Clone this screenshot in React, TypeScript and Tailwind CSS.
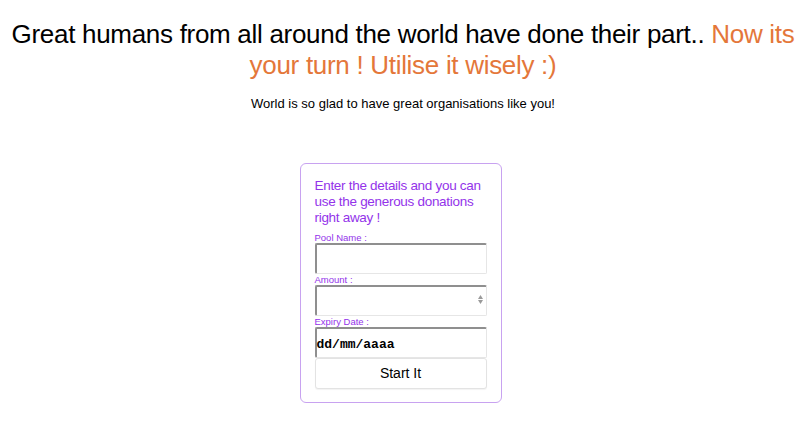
import React from 'react';

const labelCls = "block text-[9.5px] leading-[10px] text-[#9333ea] mt-[1px]";
const inputCls =
  "block w-full h-[31px] bg-white border-t-2 border-l-2 border-r border-b border-t-[#8f8f8f] border-l-[#8f8f8f] border-r-[#e6e6e6] border-b-[#e6e6e6] rounded-[2px] px-1 text-[13px] outline-none";

const App: React.FC = () => {
  return (
    <div className="min-h-screen bg-white font-['Liberation_Sans',Arial,sans-serif] text-black">
      <div className="pt-[19px] text-center">
        <h1 className="text-[26px] leading-[31px] px-2 tracking-[-0.3px]">
          Great humans from all around the world have done their part..{' '}
          <span className="text-[#e4773a]">Now its your turn ! Utilise it wisely :)</span>
        </h1>
        <p className="mt-[15px] text-[13px] leading-[16px]">World is so glad to have great organisations like you!</p>
      </div>

      <div className="flex justify-center mt-[51px] pr-[5px]">
        <form className="w-[202px] border border-[#c8a2f0] rounded-[6px] px-[14px] pt-[14px] pb-[13px]">
          <p className="text-[13.5px] leading-[16px] tracking-[-0.3px] text-[#9333ea] mb-[7px]">
            Enter the details and you can use the generous donations right away !
          </p>
          <label className={labelCls}>Pool Name :</label>
          <input type="text" className={inputCls} />
          <label className={labelCls}>Amount :</label>
          <div className="relative">
            <input type="text" className={inputCls} />
            <span className="absolute right-[4px] top-[10px] flex flex-col items-center leading-none">
              <svg width="5" height="4" viewBox="0 0 5 4"><path d="M0 4 L2.5 0 L5 4 Z" fill="#9a9a9a" /></svg>
              <svg width="5" height="4" viewBox="0 0 5 4" className="mt-[1px]"><path d="M0 0 L2.5 4 L5 0 Z" fill="#9a9a9a" /></svg>
            </span>
          </div>
          <label className={labelCls}>Expiry Date :</label>
          <div className="relative">
            <input type="text" className={inputCls} />
            <span className="absolute left-[2px] top-[8px] text-[13px] font-bold font-['Liberation_Mono',monospace] pointer-events-none">
              dd/mm/aaaa
            </span>
          </div>
          <button
            type="button"
            className="block w-full h-[31px] bg-white border border-[#e3e3e3] rounded-[3px] text-[14px] shadow-[0_1px_1px_rgba(0,0,0,0.05)]"
          >
            Start It
          </button>
        </form>
      </div>
    </div>
  );
};

export default App;
